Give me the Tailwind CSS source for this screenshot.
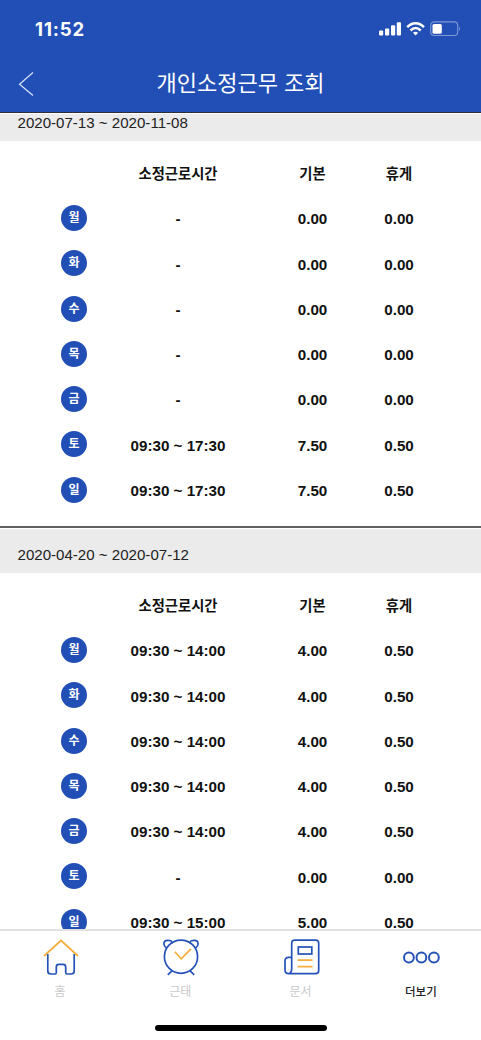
<!DOCTYPE html>
<html lang="ko">
<head>
<meta charset="utf-8">
<title>개인소정근무 조회</title>
<script src="https://cdn.jsdelivr.net/npm/@tailwindcss/browser@4"></script>
</head>
<body class="w-[481px] h-[1040px] overflow-hidden bg-white text-[#111] font-['Liberation_Sans','Noto_Sans_CJK_KR',sans-serif] flex flex-col">
<header class="h-[114px] shrink-0 bg-[#214fb6] text-white border-b border-b-white flex flex-col">
  <div class="h-[57px] pt-px pl-[35px] pr-[20px] flex items-center justify-between">
    <span class="font-['Inter',sans-serif] font-bold text-[18.5px] leading-none tracking-[0.9px]">11:52</span>
    <div class="flex items-center">
      <svg class="-mt-px" width="82" height="16" viewBox="0 0 82 16" fill="none">
        <g fill="#fff"><rect x="0" y="9.5" width="4.2" height="5" rx="1"/><rect x="6" y="7.5" width="4.2" height="7" rx="1"/><rect x="12" y="4.3" width="4.2" height="10.2" rx="1"/><rect x="17.8" y="1.3" width="4.2" height="13.2" rx="1"/></g>
        <g stroke="#fff" stroke-width="2.5"><path d="M28.2 6.1C33.1 .9 40.1 .9 45 6.1"/><path d="M31.5 9.5C34.7 6.4 38.5 6.4 41.7 9.5"/></g>
        <path d="M34 11.8Q36.6 9.7 39.2 11.8L36.6 14.4Z" fill="#fff"/>
        <rect x="51.7" y=".9" width="27" height="13.6" rx="3.5" stroke="#7f9ad5" stroke-width="1.1"/>
        <rect x="53.5" y="3" width="9.3" height="9.8" rx="1.5" fill="#fff"/>
        <path d="M80.1 5.4Q82 7.7 80.1 10Z" fill="#7f9ad5"/>
      </svg>
    </div>
  </div>
  <div class="h-[55px] pb-[2px] shrink-0 grid grid-cols-[60px_1fr_60px] items-center">
    <svg class="ml-[18px]" width="16" height="26" viewBox="0 0 16 26" fill="none" stroke="#dce5f7" stroke-width="1.2"><path d="M15 1.5L1.5 13.2L15 24.5"/></svg>
    <h1 class="text-center text-[22px] leading-[30px] font-normal">개인소정근무 조회</h1>
  </div>
  <div class="h-px shrink-0 bg-[#2c2f3b]"></div>
</header>
<main id="schedule" class="h-[815px] shrink-0 overflow-hidden"></main>
<nav class="h-[111px] shrink-0 border-t-2 border-[#e0e1e2] bg-white flex flex-col">
  <div class="grid grid-cols-4 w-[481px] pt-[8px] text-[12px] leading-[18px] text-[#c9c9c9]">
    <div class="flex flex-col items-center gap-[7px]">
      <svg class="translate-x-[1px]" width="36" height="37" viewBox="0 0 36 37" fill="none" stroke-width="1.7"><path d="M4.8 15V32Q4.8 35 7.8 35H12.2Q13.3 35 13.3 33.5V28Q13.3 25.4 16 25.4H20Q22.7 25.4 22.7 28V33.5Q22.7 35 24 35H28.2Q31.2 35 31.2 32V15" stroke="#2452b8"/><path d="M1 17L18 1.5L35 17" stroke="#f3ae3d"/></svg>
      <span>홈</span>
    </div>
    <div class="flex flex-col items-center gap-[7px]">
      <svg class="translate-x-[1px]" width="36" height="37" viewBox="0 0 36 37" fill="none" stroke="#2452b8" stroke-width="1.7"><circle cx="18" cy="17.7" r="16.6"/><path d="M3.4 9.2C-.6 6 .6 1.3 4.4 1.3C7.6 1.3 9.2 1.8 8.8 4.6M27.2 4.6C26.8 1.8 28.4 1.3 31.6 1.3C35.4 1.3 36.6 6 32.6 9.2M9.2 31.6L4.8 35.8M26.8 31.6L31.2 35.8"/><path d="M11.8 12.8L18.2 19.8L28 9.8" stroke="#f3ae3d"/></svg>
      <span>근태</span>
    </div>
    <div class="flex flex-col items-center gap-[7px]">
      <svg class="translate-x-[1px]" width="36" height="37" viewBox="0 0 36 37" fill="none" stroke="#2452b8" stroke-width="1.7"><path d="M7.7 30V4Q7.7 1.2 10.5 1.2H31.7Q34.7 1.2 34.7 4.2V31.5Q34.7 34.6 31.7 34.6H4.5Q1 34.6 1 30.5V22Q1 18.3 4.7 18.3H7.7M7.7 29Q7.7 34.6 4.4 34.6"/><rect x="14.3" y="8" width="13.5" height="7"/><path d="M13.5 21.2H28.5M13.5 27.7H28.5" stroke="#f3ae3d"/></svg>
      <span>문서</span>
    </div>
    <div class="flex flex-col items-center gap-[7px] text-[#222]">
      <svg class="translate-x-[1px]" width="38" height="37" viewBox="0 0 38 37" fill="none" stroke="#2452b8" stroke-width="2"><circle cx="5.9" cy="18.5" r="4.9"/><circle cx="18.4" cy="18.5" r="4.9"/><circle cx="30.9" cy="18.5" r="4.9"/></svg>
      <span class="text-[11.5px] font-medium">더보기</span>
    </div>
  </div>
  <div class="mt-[24px] mx-auto w-[172px] h-[6px] rounded-full bg-black"></div>
</nav>
<script>
const off = ['-', '0.00', '0.00'];
const late = ['09:30 ~ 17:30', '7.50', '0.50'];
const early = ['09:30 ~ 14:00', '4.00', '0.50'];
const days = ['월', '화', '수', '목', '금', '토', '일'];
const periods = [
  { range: '2020-07-13 ~ 2020-11-08', bar: 'h-[27px]', rows: [off, off, off, off, off, late, late] },
  { range: '2020-04-20 ~ 2020-07-12', bar: 'h-[44px]', rows: [early, early, early, early, early, off, ['09:30 ~ 15:00', '5.00', '0.50']] },
];
const cols = 'grid grid-cols-[52px_156px_113px_60px] pl-[48px] items-center text-center';
document.getElementById('schedule').innerHTML = periods.map(p => `
  <section class="pb-[13.85px] border-b-2 border-[#606062] mb-px">
    <div class="${p.bar} pb-[9.6px] bg-[#ebebeb] pl-[17.5px] flex items-end text-[15.08px] leading-[17px] text-[#222]">${p.range}</div>
    <div class="${cols} h-[54.4px] pt-[11px] text-[14.3px] leading-[22px] font-bold"><span></span><span>소정근로시간</span><span>기본</span><span>휴게</span></div>
    ${p.rows.map((r, i) => `<div class="${cols} h-[45.25px] text-[15.2px] leading-[18px] font-bold">
      <span class="mx-auto size-[26px] rounded-full bg-[#214fb6] text-white text-[12px] leading-[26px] font-bold">${days[i]}</span>
      ${r.map(v => `<span class="pt-[2.6px]">${v}</span>`).join('')}
    </div>`).join('')}
  </section>`).join('');
</script>
</body>
</html>
